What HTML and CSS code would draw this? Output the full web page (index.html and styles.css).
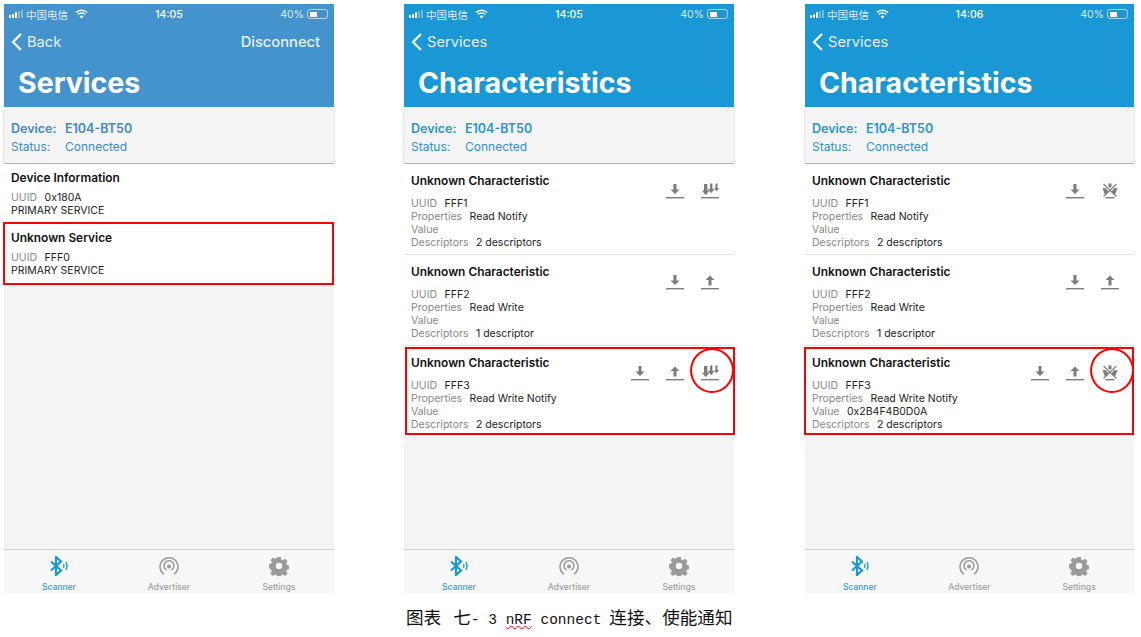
FILE: index.html
```html
<!DOCTYPE html>
<html lang="en">
<head>
    <meta charset="UTF-8">
    <meta name="viewport" content="width=device-width, initial-scale=1.0">
    <title>nRF Connect</title>
    <link rel="stylesheet" href="styles.css">
</head>
<body>
    <svg class="sprites" width="0" height="0">
        <symbol id="i-read" viewBox="0 0 18 16">
            <path d="M7.500 1h3v5.500h3l-4.500 4.500-4.500-4.500h3z"/>
            <rect x="0" y="14" width="18" height="1.400"/>
        </symbol>
        <symbol id="i-write" viewBox="0 0 18 16">
            <path d="M7.500 11.500h3v-5.500h3l-4.500-4.500-4.500 4.500h3z"/>
            <rect x="0" y="14" width="18" height="1.400"/>
        </symbol>
        <symbol id="i-notify" viewBox="0 0 18 16">
            <path d="M3 1h3.400v6.500h2.100l-3.800 4.700-3.800-4.700h2.100z"/>
            <path d="M9 .5h2.400v5.500h2.100l-3.300 4.300-3.300-4.300h2.100z"/>
            <path d="M14.500 .5h2v4.500h1.500l-2.500 3.500-2.500-3.500h1.500z"/>
            <rect x="0" y="14" width="18" height="1.400"/>
        </symbol>
        <symbol id="i-stop" viewBox="0 0 18 16">
            <path d="M7.500 .5h3v3l-1.500 1.500-1.500-1.500z"/>
            <path d="M1.500 5.200l3-.2 3.200 3.500-3.700 3.200z"/>
            <path d="M16.500 5.200l-3-.2-3.200 3.500 3.700 3.200z"/>
            <path d="M2.500 1l13 12.500M15.500 1l-13 12.500" fill="none" stroke="currentColor" stroke-width="1.100"/>
            <rect x="4.500" y="14" width="9" height="1.400"/>
        </symbol>
        <symbol id="i-back" viewBox="0 0 12 20">
            <path d="M10 2l-8 8 8 8" fill="none" stroke="currentColor" stroke-width="2.200"/>
        </symbol>
        <symbol id="i-wifi" viewBox="0 0 14 10">
            <path d="M1 3.500a8.500 8.500 0 0 1 12 0M3 5.600a5.600 5.600 0 0 1 8 0" fill="none" stroke="currentColor" stroke-width="1.500"/>
            <path d="M5 7.600a2.800 2.800 0 0 1 4 0l-2 2.200z"/>
        </symbol>
        <symbol id="i-bluetooth" viewBox="0 0 20 20">
            <path d="M2 5.500l10 9-5 4.500V1l5 4.500-10 9" fill="none" stroke="currentColor" stroke-width="2.200"/>
            <path d="M14.500 8q1 2 0 4M17 6q2 4 0 8" fill="none" stroke="currentColor" stroke-width="1.300"/>
        </symbol>
        <symbol id="i-advert" viewBox="0 0 20 20">
            <circle cx="10" cy="10.500" r="2"/>
            <path d="M7.500 14a5 5 0 1 1 5 0" fill="none" stroke="currentColor" stroke-width="1.500"/>
            <path d="M5 18.200a9 9 0 1 1 10 0" fill="none" stroke="currentColor" stroke-width="1.600"/>
        </symbol>
        <symbol id="i-gear" viewBox="0 0 20 20">
            <path fill-rule="evenodd" d="M8.200 1h3.600l.5 2.500 1.600.7 2.200-1.400 2.500 2.500-1.400 2.200.7 1.600 2.500.5v3.600l-2.500.5-.7 1.600 1.400 2.200-2.500 2.500-2.200-1.400-1.600.7-.5 2.500H8.200l-.5-2.500-1.600-.7-2.200 1.400-2.500-2.500 1.400-2.200-.7-1.600L-.4 11.800V8.200l2.500-.5.700-1.600-1.400-2.200 2.500-2.500 2.200 1.400 1.600-.7zM10 6.800a3.200 3.200 0 1 0 0 6.400 3.200 3.200 0 0 0 0-6.400z"/>
        </symbol>
    </svg>

    <div class="screens">
        <!-- services -->
        <div class="phone phone-old">
            <div class="header">
                <div class="status">
                    <div class="carrier"><span class="bars"><i></i><i></i><i></i><i class="off"></i><i class="off"></i></span>中国电信<svg class="wifi"><use href="#i-wifi"/></svg></div>
                    <div class="time">14:05</div>
                    <div class="power">40%<span class="battery"><span></span></span></div>
                </div>
                <div class="nav">
                    <svg class="back"><use href="#i-back"/></svg><span>Back</span>
                    <span class="disconnect">Disconnect</span>
                </div>
                <h1>Services</h1>
            </div>
            <div class="device">
                <div class="device-name"><span>Device:</span>E104-BT50</div>
                <div><span>Status:</span>Connected</div>
            </div>
            <div class="list">
                <div class="row service">
                    <h2>Device Information</h2>
                    <p><span>UUID</span>0x180A</p>
                    <p>PRIMARY SERVICE</p>
                </div>
                <div class="row service">
                    <h2>Unknown Service</h2>
                    <p><span>UUID</span>FFF0</p>
                    <p>PRIMARY SERVICE</p>
                    <div class="mark mark-service"></div>
                </div>
            </div>
            <div class="tabs">
                <div class="tab active"><svg><use href="#i-bluetooth"/></svg>Scanner</div>
                <div class="tab"><svg><use href="#i-advert"/></svg>Advertiser</div>
                <div class="tab"><svg><use href="#i-gear"/></svg>Settings</div>
            </div>
        </div>

        <!-- characteristics, notify off -->
        <div class="phone phone-off">
            <div class="header">
                <div class="status">
                    <div class="carrier"><span class="bars"><i></i><i></i><i></i><i class="off"></i><i class="off"></i></span>中国电信<svg class="wifi"><use href="#i-wifi"/></svg></div>
                    <div class="time">14:05</div>
                    <div class="power">40%<span class="battery"><span></span></span></div>
                </div>
                <div class="nav">
                    <svg class="back"><use href="#i-back"/></svg><span>Services</span>
                </div>
                <h1>Characteristics</h1>
            </div>
            <div class="device">
                <div class="device-name"><span>Device:</span>E104-BT50</div>
                <div><span>Status:</span>Connected</div>
            </div>
            <div class="list">
                <div class="row char">
                    <div>
                        <h2>Unknown Characteristic</h2>
                        <p><span>UUID</span>FFF1</p>
                        <p><span>Properties</span>Read Notify</p>
                        <p><span>Value</span></p>
                        <p><span>Descriptors</span>2 descriptors</p>
                    </div>
                    <div class="actions">
                        <svg><use href="#i-read"/></svg>
                        <svg><use href="#i-notify"/></svg>
                    </div>
                </div>
                <div class="row char">
                    <div>
                        <h2>Unknown Characteristic</h2>
                        <p><span>UUID</span>FFF2</p>
                        <p><span>Properties</span>Read Write</p>
                        <p><span>Value</span></p>
                        <p><span>Descriptors</span>1 descriptor</p>
                    </div>
                    <div class="actions">
                        <svg><use href="#i-read"/></svg>
                        <svg><use href="#i-write"/></svg>
                    </div>
                </div>
                <div class="row char">
                    <div>
                        <h2>Unknown Characteristic</h2>
                        <p><span>UUID</span>FFF3</p>
                        <p><span>Properties</span>Read Write Notify</p>
                        <p><span>Value</span></p>
                        <p><span>Descriptors</span>2 descriptors</p>
                    </div>
                    <div class="actions">
                        <svg><use href="#i-read"/></svg>
                        <svg><use href="#i-write"/></svg>
                        <svg><use href="#i-notify"/></svg>
                    </div>
                    <div class="mark mark-char"></div>
                    <div class="ring"></div>
                </div>
            </div>
            <div class="tabs">
                <div class="tab active"><svg><use href="#i-bluetooth"/></svg>Scanner</div>
                <div class="tab"><svg><use href="#i-advert"/></svg>Advertiser</div>
                <div class="tab"><svg><use href="#i-gear"/></svg>Settings</div>
            </div>
        </div>

        <!-- characteristics, notify on -->
        <div class="phone phone-on">
            <div class="header">
                <div class="status">
                    <div class="carrier"><span class="bars"><i></i><i></i><i></i><i class="off"></i><i class="off"></i></span>中国电信<svg class="wifi"><use href="#i-wifi"/></svg></div>
                    <div class="time">14:06</div>
                    <div class="power">40%<span class="battery"><span></span></span></div>
                </div>
                <div class="nav">
                    <svg class="back"><use href="#i-back"/></svg><span>Services</span>
                </div>
                <h1>Characteristics</h1>
            </div>
            <div class="device">
                <div class="device-name"><span>Device:</span>E104-BT50</div>
                <div><span>Status:</span>Connected</div>
            </div>
            <div class="list">
                <div class="row char">
                    <div>
                        <h2>Unknown Characteristic</h2>
                        <p><span>UUID</span>FFF1</p>
                        <p><span>Properties</span>Read Notify</p>
                        <p><span>Value</span></p>
                        <p><span>Descriptors</span>2 descriptors</p>
                    </div>
                    <div class="actions">
                        <svg><use href="#i-read"/></svg>
                        <svg><use href="#i-stop"/></svg>
                    </div>
                </div>
                <div class="row char">
                    <div>
                        <h2>Unknown Characteristic</h2>
                        <p><span>UUID</span>FFF2</p>
                        <p><span>Properties</span>Read Write</p>
                        <p><span>Value</span></p>
                        <p><span>Descriptors</span>1 descriptor</p>
                    </div>
                    <div class="actions">
                        <svg><use href="#i-read"/></svg>
                        <svg><use href="#i-write"/></svg>
                    </div>
                </div>
                <div class="row char">
                    <div>
                        <h2>Unknown Characteristic</h2>
                        <p><span>UUID</span>FFF3</p>
                        <p><span>Properties</span>Read Write Notify</p>
                        <p><span>Value</span>0x2B4F4B0D0A</p>
                        <p><span>Descriptors</span>2 descriptors</p>
                    </div>
                    <div class="actions">
                        <svg><use href="#i-read"/></svg>
                        <svg><use href="#i-write"/></svg>
                        <svg><use href="#i-stop"/></svg>
                    </div>
                    <div class="mark mark-char"></div>
                    <div class="ring"></div>
                </div>
            </div>
            <div class="tabs">
                <div class="tab active"><svg><use href="#i-bluetooth"/></svg>Scanner</div>
                <div class="tab"><svg><use href="#i-advert"/></svg>Advertiser</div>
                <div class="tab"><svg><use href="#i-gear"/></svg>Settings</div>
            </div>
        </div>
    </div>

    <div class="caption">图表<b>七<em>- 3 <u>nRF</u> connect</em></b><span>连接、使能通知</span></div>
</body>
</html>
```

FILE: styles.css
```css
* {
    box-sizing: border-box;
}

body {
    margin: 0;
    padding: 4px 0 0 4px;
    background: #fff;
    font-family: "Inter", "Noto Sans CJK SC", sans-serif;
    overflow: hidden;
}

.sprites {
    position: absolute;
}

.screens {
    display: flex;
    gap: 70px;
}

.phone {
    display: flex;
    flex-direction: column;
    width: 330px;
    height: 589px;
    background: #f4f4f4;
}

.phone-on {
    width: 329px;
    margin-left: 1px;
}

/* header */
.header {
    height: 103px;
    background: #1a98d5;
    color: #fff;
}

.phone-old .header {
    background: #4593cd;
}

.status {
    display: grid;
    grid-template-columns: 1fr auto 1fr;
    align-items: center;
    height: 20px;
    padding: 0 5px;
    font-size: 10.5px;
    color: #dcecf7;
}

.carrier {
    display: flex;
    align-items: center;
}

.bars {
    display: flex;
    align-items: flex-end;
    gap: 1px;
    height: 8px;
    margin-right: 3px;
}

.bars i {
    width: 2px;
    background: #fff;
}

.bars i:nth-child(1) { height: 3px; }
.bars i:nth-child(2) { height: 4px; }
.bars i:nth-child(3) { height: 6px; }
.bars i:nth-child(4) { height: 7px; }
.bars i:nth-child(5) { height: 8px; }

.bars i.off {
    background: rgba(255, 255, 255, 0.35);
}

.wifi {
    width: 13px;
    height: 10px;
    margin-left: 7px;
    fill: #fff;
    color: #fff;
}

.time {
    font-weight: 500;
    color: #fff;
}

.power {
    display: flex;
    align-items: center;
    justify-content: flex-end;
    gap: 3px;
}

.battery {
    display: block;
    width: 21px;
    height: 10px;
    padding: 1.5px;
    margin-right: 1px;
    border: 1px solid rgba(255, 255, 255, 0.6);
    border-radius: 3px;
}

.battery span {
    display: block;
    width: 7px;
    height: 100%;
    background: #fff;
}

.nav {
    display: flex;
    align-items: center;
    height: 36px;
    padding: 0 14px 0 7px;
    font-size: 14.700px;
    color: #e4f1fa;
}

.back {
    width: 12px;
    height: 20px;
    margin-right: 4px;
    color: #fff;
}

.disconnect {
    margin-left: auto;
    font-weight: 500;
}

h1 {
    margin: 0;
    padding-left: 14px;
    font-size: 28.500px;
    line-height: 46px;
    font-weight: 700;
}

/* connected device */
.device {
    position: relative;
    height: 56px;
    padding: 13px 7px 0;
    background: #f4f4f4;
    font-size: 12px;
    line-height: 18px;
    color: #2b94d1;
    box-shadow: 0 2px 2px rgba(0, 0, 0, 0.3);
}

.phone-old .device {
    color: #4189c9;
}

.device span {
    display: inline-block;
    width: 54px;
}

.device-name {
    font-size: 12.500px;
    font-weight: 600;
}

/* list */
.list {
    flex: 1;
    padding-top: 1px;
}

.row {
    position: relative;
    padding: 0 7px;
    background: #fff;
    color: #222;
}

.row p {
    margin: 0;
    font-size: 10.500px;
    line-height: 13px;
}

.row p span {
    margin-right: 7.500px;
    color: #888;
}

h2 {
    margin: 0;
    font-size: 11.900px;
    font-weight: 600;
    color: #111;
}

.service {
    height: 60px;
    padding-top: 6px;
}

.service h2 {
    line-height: 16px;
    margin-bottom: 5px;
}

.char {
    display: flex;
    justify-content: space-between;
    height: 91px;
    padding-top: 9px;
    border-bottom: 1px solid #e4e4e4;
}

.char:last-child {
    border-bottom: none;
}

.char h2 {
    line-height: 16px;
    margin-bottom: 8px;
}

.actions {
    display: flex;
    gap: 17px;
    padding: 10px 8px 0 0;
}

.actions svg {
    width: 18px;
    height: 16px;
    fill: #7d7d7d;
    color: #7d7d7d;
}

/* red annotations */
.mark {
    position: absolute;
    left: 0;
    right: 0;
    border: 2.500px solid #f00;
}

.mark-service {
    top: -2px;
    bottom: -1px;
    left: -1px;
}

.mark-char {
    top: 1px;
    bottom: 2px;
}

.phone-off .mark-char {
    left: 1px;
    right: -1px;
}

.phone-on .mark-char {
    left: -1px;
}

.ring {
    position: absolute;
    top: 2px;
    right: 0;
    width: 44px;
    height: 45px;
    border: 2px solid #f00;
    border-radius: 50%;
}

/* tab bar */
.tabs {
    display: grid;
    grid-template-columns: repeat(3, 1fr);
    height: 44px;
    border-top: 1px solid #d0d0d0;
    background: #f7f7f7;
}

.tab {
    display: flex;
    flex-direction: column;
    align-items: center;
    padding-top: 6px;
    font-size: 8.500px;
    font-weight: 500;
    color: #a0a0a0;
}

.tab svg {
    width: 20px;
    height: 20px;
    margin-bottom: 6px;
    fill: #9b9b9b;
    color: #9b9b9b;
}

.tab.active {
    color: #2b9fd8;
}

.tab.active svg {
    fill: #1a98d5;
    color: #1a98d5;
}

/* caption */
.caption {
    margin: 13px 0 0 402px;
    font-family: "Liberation Serif", "Noto Sans CJK SC", serif;
    font-size: 17.600px;
    line-height: 24px;
    color: #111;
}

.caption b {
    font-weight: 400;
    margin-left: 12px;
}

.caption em {
    font-family: "Liberation Mono", monospace;
    font-style: normal;
    font-size: 14.500px;
}

.caption span {
    margin-left: 8px;
}

.caption u {
    text-decoration: underline wavy #f00 1px;
}
```
